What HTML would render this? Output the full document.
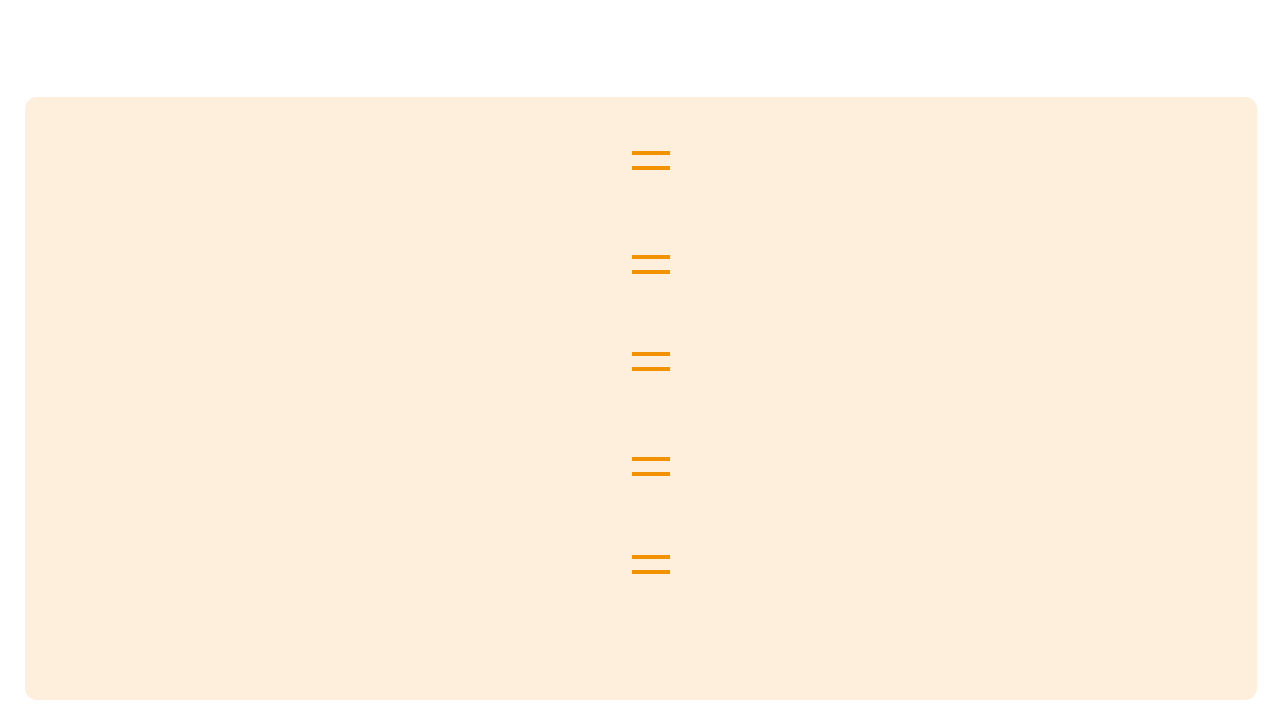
<!DOCTYPE html>
<html><head><style>
html,body{margin:0;padding:0;background:#fff;width:1280px;height:721px;overflow:hidden}
.card{position:absolute;left:25px;top:97px;width:1232px;height:603px;background:#FDEFDB;border-radius:12px}
.b{position:absolute;left:632px;width:38px;height:4px;background:#F39200}
</style></head><body>
<div class="card"></div>
<div class="b" style="top:151px"></div><div class="b" style="top:166px"></div>
<div class="b" style="top:255px"></div><div class="b" style="top:270px"></div>
<div class="b" style="top:352px"></div><div class="b" style="top:367px"></div>
<div class="b" style="top:457px"></div><div class="b" style="top:472px"></div>
<div class="b" style="top:555px"></div><div class="b" style="top:570px"></div>
</body></html>
